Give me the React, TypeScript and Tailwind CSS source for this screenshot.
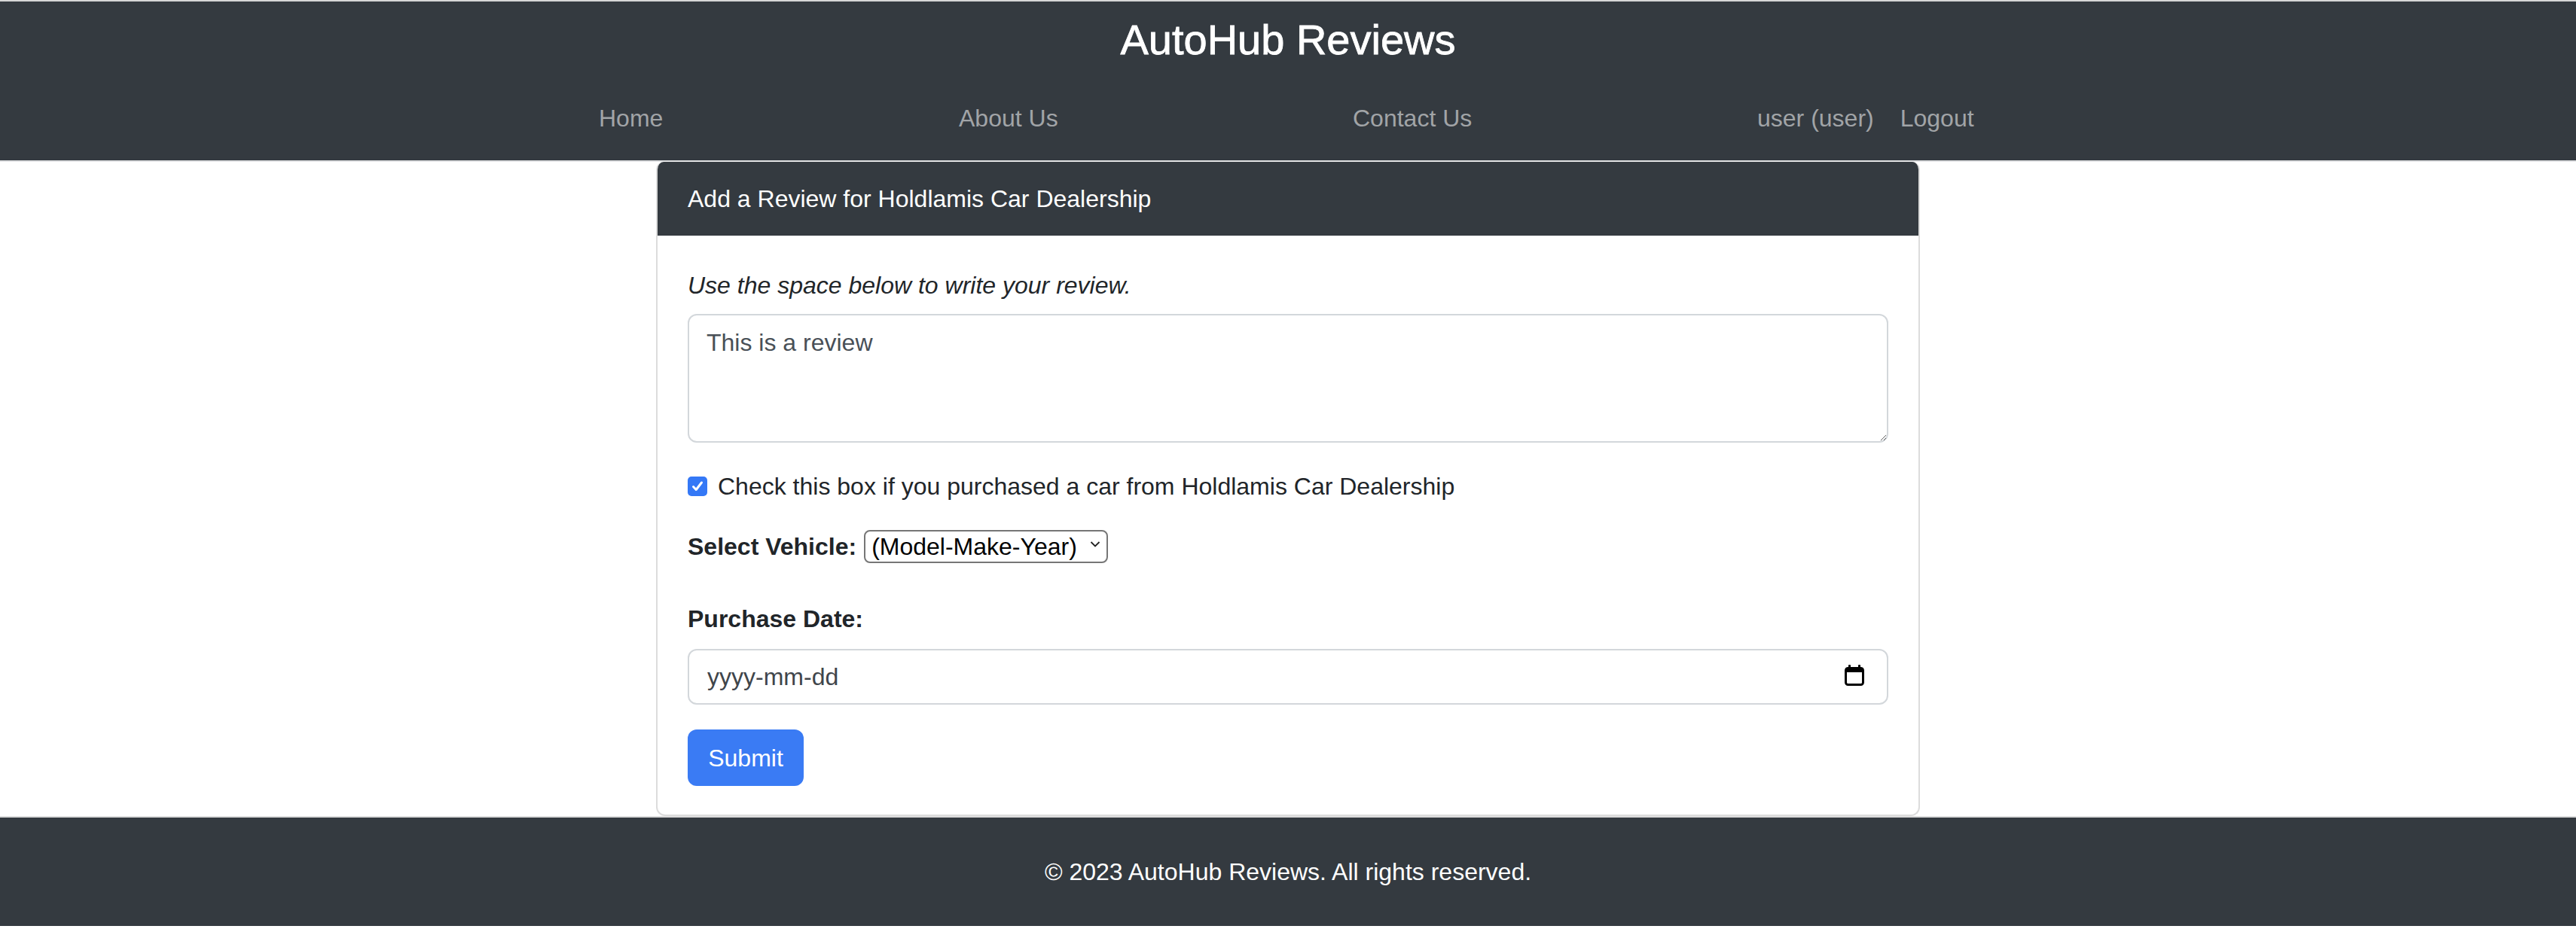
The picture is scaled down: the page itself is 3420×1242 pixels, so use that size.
import React from "react";

const font = { fontFamily: '"Liberation Sans", Arial, sans-serif' };

function CalendarIcon() {
  return (
    <svg width="28" height="30" viewBox="0 0 28 30" fill="none">
      <rect x="2.5" y="5.5" width="23" height="22" rx="3" stroke="#000" strokeWidth="3" />
      <rect x="2" y="5" width="24" height="6" fill="#000" />
      <rect x="6" y="1" width="3" height="6" rx="1" fill="#000" />
      <rect x="19" y="1" width="3" height="6" rx="1" fill="#000" />
    </svg>
  );
}

function Check() {
  return (
    <span className="flex h-[26px] w-[26px] shrink-0 items-center justify-center rounded-[5px] bg-[#3478f6]">
      <svg width="18" height="18" viewBox="0 0 18 18" fill="none">
        <path d="M3.5 9.5 L7.2 13.5 L14.5 4" stroke="#fff" strokeWidth="3" strokeLinecap="round" strokeLinejoin="round" />
      </svg>
    </span>
  );
}

export default function App() {
  return (
    <div className="min-w-[3420px] bg-white text-[32px] text-[#212529]" style={font}>
      <header className="border-t-2 border-b-2 border-t-[#d6d6d6] border-b-[#e2e3e5] bg-[#343a40]">
        <div className="flex h-[211px] flex-col items-center">
          <h1 className="mt-[17px] h-[67px] text-[56px] font-medium leading-[67px] text-white [-webkit-text-stroke:0.8px_#fff]">AutoHub Reviews</h1>
          <nav className="mt-[47px] flex h-[48px] w-[1830px] items-center leading-[48px] text-[#a1a4a7]">
            <a className="w-[478px]">Home</a>
            <a className="w-[523px]">About Us</a>
            <a className="w-[537px]">Contact Us</a>
            <a>user (user)</a>
            <a className="ml-[35px]">Logout</a>
          </nav>
        </div>
      </header>

      <main className="mx-auto w-[1678px]">
        <div className="overflow-hidden rounded-b-[12px] rounded-t-[10px] border-2 border-t-0 border-[#dcdcdc]">
          <div className="-mx-[2px] flex h-[98px] items-center bg-[#343a40] px-[42px] text-white">
            <span className="leading-[48px]">Add a Review for Holdlamis Car Dealership</span>
          </div>
          <div className="px-[40px] pb-[38px] pt-[42px]">
            <p className="italic leading-[48px]">Use the space below to write your review.</p>
            <textarea
              className="mt-[14px] block h-[171px] w-full rounded-[12px] border-2 border-[#d3d7db] px-[23px] py-[12px] leading-[48px] text-[#495057] outline-none"
              defaultValue="This is a review"
              style={font}
            />
            <label className="mt-[34px] flex h-[48px] items-center gap-[14px] leading-[48px]">
              <Check />
              <span>Check this box if you purchased a car from Holdlamis Car Dealership</span>
            </label>
            <div className="mt-[32px] flex h-[48px] items-center">
              <span className="font-bold leading-[48px]">Select Vehicle:</span>
              <div className="relative ml-[10px]">
                <select
                  className="h-[44px] w-[324px] appearance-none rounded-[8px] border-2 border-[#767676] bg-white pl-[8px] pr-[30px] text-[32px] leading-[40px] text-black outline-none"
                  style={font}
                  defaultValue="m"
                >
                  <option value="m">(Model-Make-Year)</option>
                </select>
                <svg className="pointer-events-none absolute right-[10px] top-[16px]" width="14" height="10" viewBox="0 0 14 10" fill="none">
                  <path d="M1.5 2 L7 7.5 L12.5 2" stroke="#222" strokeWidth="1.8" />
                </svg>
              </div>
            </div>
            <p className="mt-[48px] font-bold leading-[48px]">Purchase Date:</p>
            <div className="relative mt-[16px]">
              <input
                readOnly
                value="yyyy-mm-dd"
                className="block h-[74px] w-full rounded-[12px] border-2 border-[#d3d7db] px-[24px] text-[#3f454b] outline-none"
                style={font}
              />
              <span className="pointer-events-none absolute right-[31px] top-[20px]">
                <CalendarIcon />
              </span>
            </div>
            <button className="mt-[33px] flex h-[75px] w-[154px] items-center justify-center rounded-[12px] bg-[#3a7bf4] text-white" style={font}>
              Submit
            </button>
          </div>
        </div>
      </main>

      <footer className="border-t-2 border-[#dcdcdc] bg-[#343a40]">
        <div className="flex h-[144px] items-center justify-center text-white">© 2023 AutoHub Reviews. All rights reserved.</div>
      </footer>
      <div className="h-[11px] bg-white" />
    </div>
  );
}
